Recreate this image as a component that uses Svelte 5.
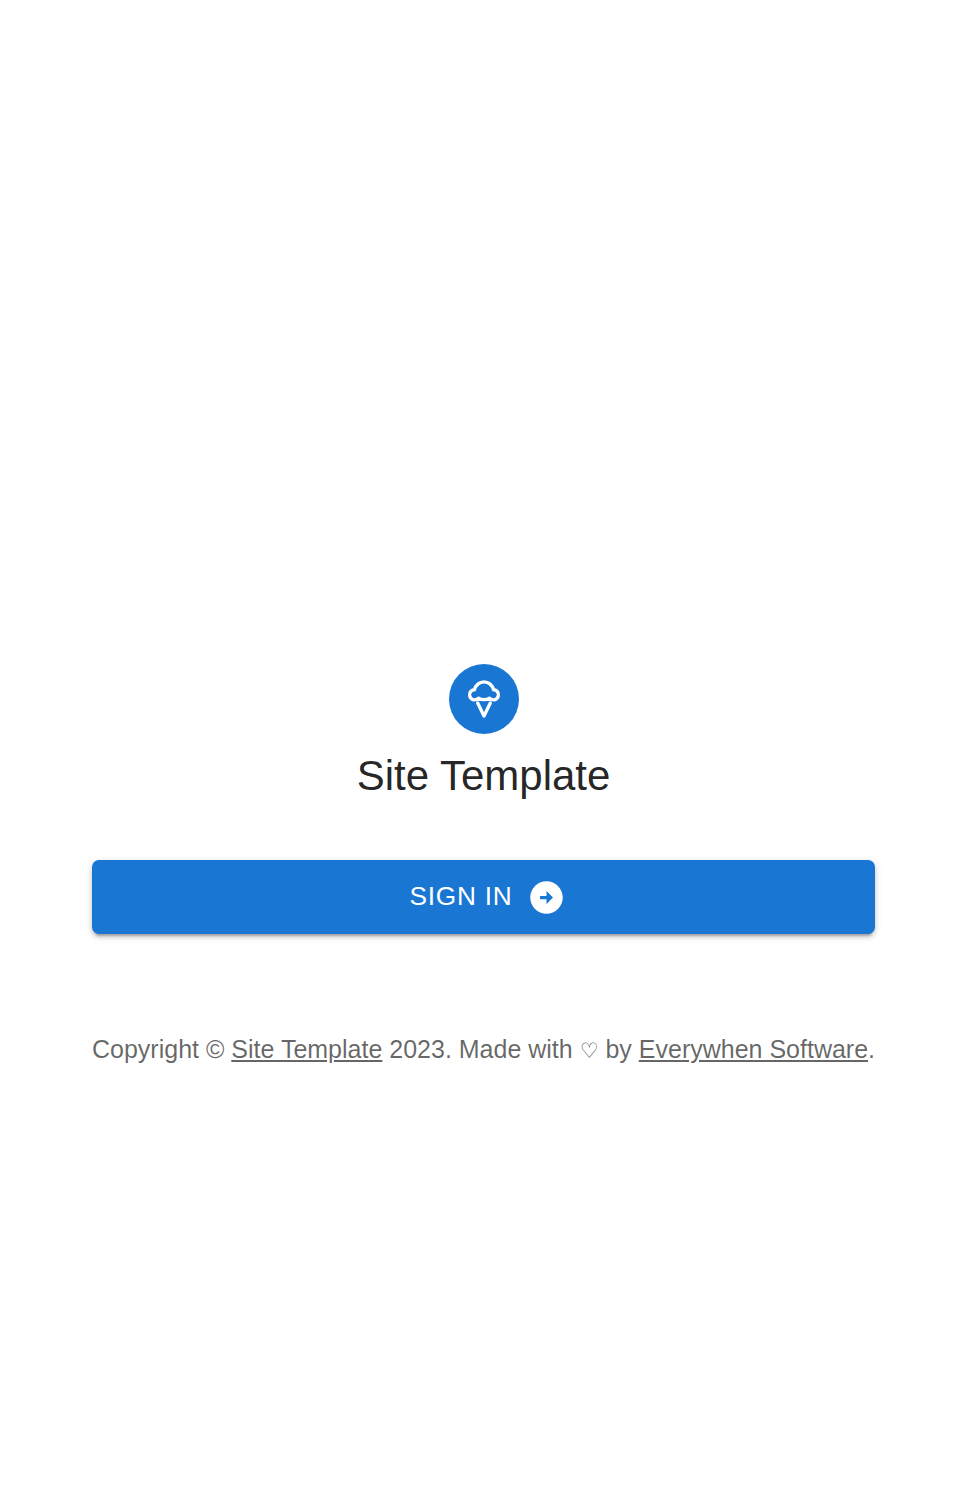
<script lang="ts">
  let year = 2023;
  let siteName = "Site Template";
</script>

<main class="page">
  <div class="login-box">
    <div class="avatar">
      <svg viewBox="0 0 24 24" width="42" height="42" fill="none" stroke="#fff" stroke-width="1.9" stroke-linecap="round" stroke-linejoin="round">
        <path d="M6.7 12.5A2.9 2.9 0 0 1 6.6 6.7A5.5 5.5 0 0 1 17.4 6.7A2.9 2.9 0 0 1 17.3 12.5c-1 0-1.7-.4-2.2-1c-.8.6-1.8 .9-3.1 .9s-2.300-.3-3.100-.9c-.5 .6-1.200 1-2.200 1z" />
        <path d="M8.400 14.300l3.600 7.400l3.600-7.400" />
      </svg>
    </div>
    <h1 class="title">{siteName}</h1>

    <button class="sign-in" type="button">
      <span>Sign In</span>
      <svg viewBox="0 0 24 24" width="39" height="39" fill="#fff">
        <path d="M22 12c0-5.52-4.48-10-10-10S2 6.48 2 12s4.48 10 10 10 10-4.48 10-10zm-10 1H8v-2h4V8l4 4-4 4v-3z" />
      </svg>
    </button>

    <p class="copyright">
      Copyright © <a href="#top">{siteName}</a> {year}. Made with <span class="heart">♡</span> by <a href="#top">Everywhen Software</a>.
    </p>
  </div>
</main>

<style>
  :global(body) {
    background: #fff;
  }

  .page {
    min-height: 1500px;
    box-sizing: border-box;
    padding: 664px 0 0 92px;
    font-family: "Liberation Sans", Arial, sans-serif;
  }

  .login-box {
    width: fit-content;
    display: flex;
    flex-direction: column;
    align-items: center;
  }

  .avatar {
    width: 70px;
    height: 70px;
    border-radius: 50%;
    background: #1976d2;
    display: flex;
    align-items: center;
    justify-content: center;
  }

  .title {
    margin: 14px 0 0;
    font-size: 42px;
    font-weight: 400;
    line-height: 56px;
    color: rgba(0, 0, 0, 0.87);
  }

  .sign-in {
    width: 100%;
    height: 74px;
    margin-top: 56px;
    padding: 0 0 0 8px;
    border: 0;
    border-radius: 7px;
    background: #1976d2;
    color: #fff;
    font: 500 26.25px/1.75 "Liberation Sans", Arial, sans-serif;
    letter-spacing: 0.75px;
    text-transform: uppercase;
    display: flex;
    align-items: center;
    justify-content: center;
    gap: 14px;
    box-shadow:
      0 5px 2px -3px rgba(0, 0, 0, 0.2),
      0 3px 4px 0 rgba(0, 0, 0, 0.14),
      0 2px 8px 0 rgba(0, 0, 0, 0.12);
  }

  .copyright {
    margin: 98px 0 0;
    font-size: 25px;
    line-height: 35px;
    color: rgba(0, 0, 0, 0.6);
    white-space: nowrap;
  }

  .copyright a {
    color: inherit;
  }

  .heart {
    font-family: "DejaVu Sans", sans-serif;
    font-size: 21px;
    color: rgba(0, 0, 0, 0.8);
  }
</style>
